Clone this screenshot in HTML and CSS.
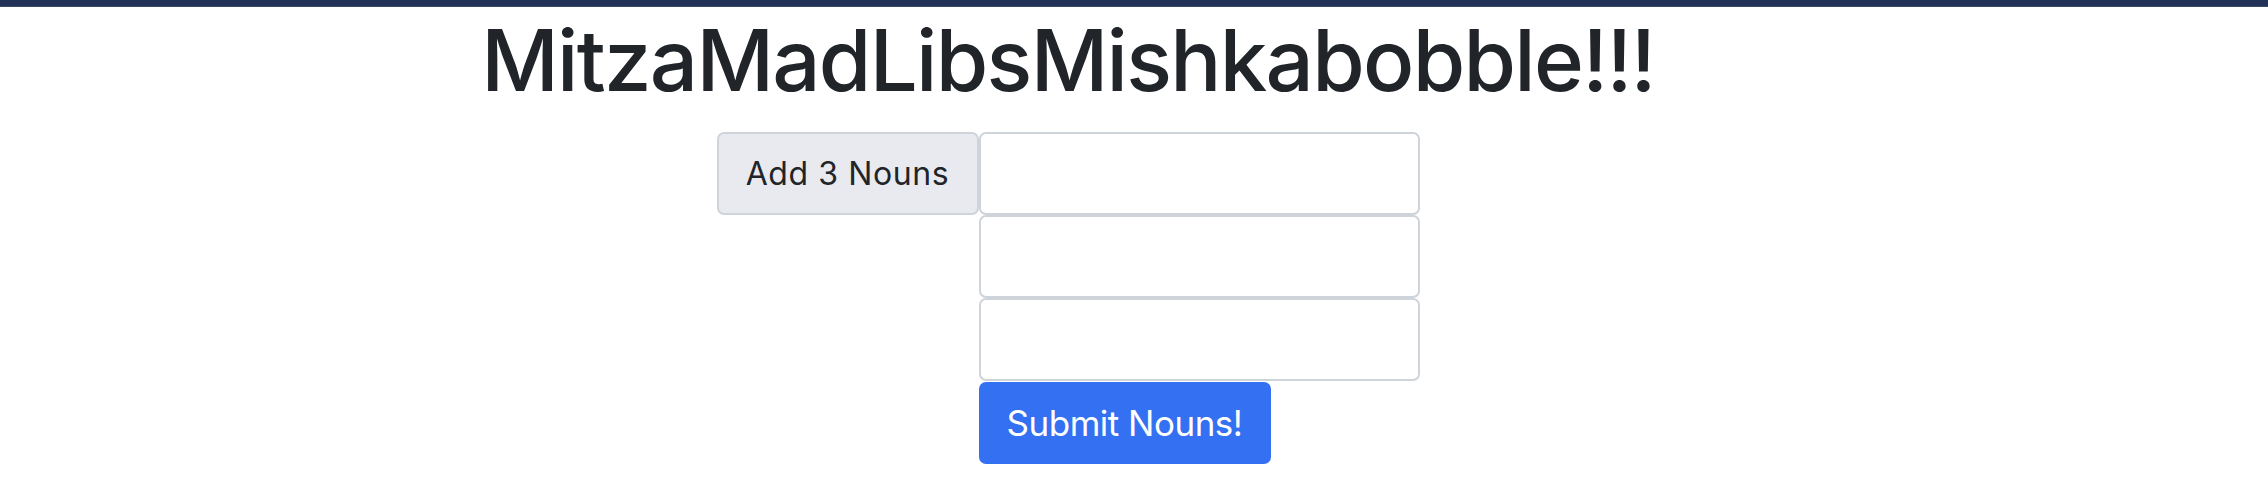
FILE: index.html
```html
<!DOCTYPE html>
<html lang="en">
<head>
<meta charset="utf-8">
<title>MitzaMadLibsMishkabobble</title>
<link rel="stylesheet" href="styles.css">
</head>
<body>
<div class="topbar"></div>
<main class="page">
  <h1 class="title">MitzaMadLibsMishkabobble!!!</h1>
  <form class="noun-form">
    <span class="group-label">Add 3 Nouns</span>
    <div class="fields">
      <input class="field" type="text" aria-label="Noun 1">
      <input class="field" type="text" aria-label="Noun 2">
      <input class="field" type="text" aria-label="Noun 3">
      <button class="submit" type="button">Submit Nouns!</button>
    </div>
  </form>
</main>
</body>
</html>
```

FILE: styles.css
```css
* { box-sizing: border-box; }

body {
  margin: 0;
  background: #ffffff;
  color: #212529;
  font-family: Inter, "Noto Sans", "Liberation Sans", sans-serif;
}

.topbar {
  height: 7px;
  background: #213256;
  border-bottom: 1px solid #3b4b6c;
}

.page {
  width: 2136px;
  display: flex;
  flex-direction: column;
  align-items: center;
}

.title {
  margin: 3px 0 20px;
  font-size: 85px;
  font-weight: 500;
  line-height: 102px;
  letter-spacing: -1.7px;
  color: #212529;
  white-space: nowrap;
}

.noun-form {
  display: flex;
  align-items: flex-start;
}

.group-label {
  width: 262px;
  height: 83px;
  display: flex;
  align-items: center;
  justify-content: center;
  background: #e9eaef;
  border: 2px solid #ced4da;
  border-radius: 7px;
  font-size: 32px;
  letter-spacing: 0.6px;
  color: #212529;
}

.fields {
  width: 441px;
  display: flex;
  flex-direction: column;
  align-items: flex-start;
}

.field {
  display: block;
  width: 441px;
  height: 83px;
  margin: 0;
  border: 2px solid #ced4da;
  border-radius: 7px;
  background: #ffffff;
  font-family: inherit;
  font-size: 30px;
  padding: 0 20px;
}

.submit {
  margin-top: 1px;
  width: 292px;
  height: 82px;
  border: none;
  border-radius: 7px;
  background: #3470f2;
  color: #ffffff;
  font-family: inherit;
  font-size: 35px;
  letter-spacing: -0.5px;
  padding: 0;
}
```
